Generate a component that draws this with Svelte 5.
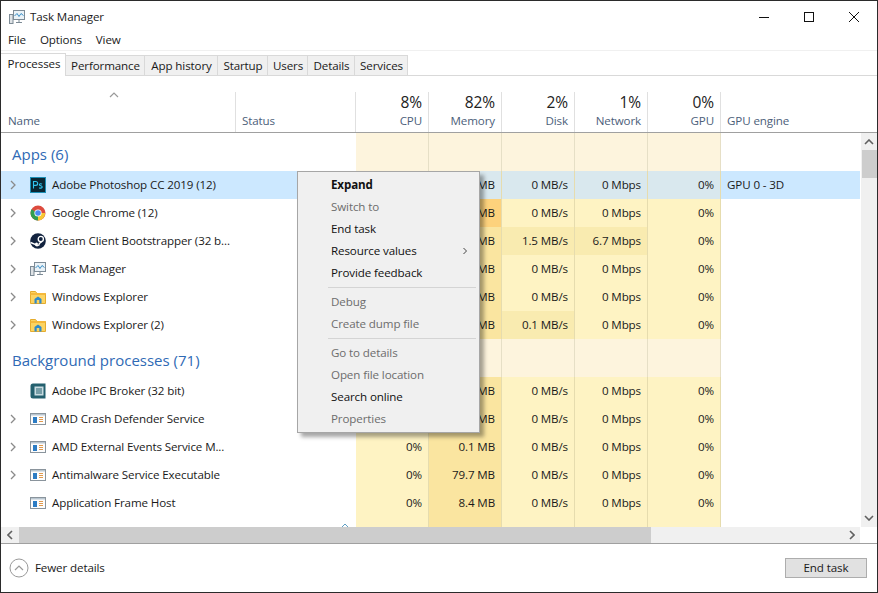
<script>
  const H = '#fef3c3', M = '#fae5a0', D = '#f9ebb0', O = '#fdd27c', S = '#d9e8ee';
  const apps = [
    { name: 'Adobe Photoshop CC 2019 (12)', icon: 'ps', arrow: true, sel: true, cpu: '', mem: 'MB', disk: '0 MB/s', net: '0 Mbps', gpu: '0%', engine: 'GPU 0 - 3D', mb: S },
    { name: 'Google Chrome (12)', icon: 'chrome', arrow: true, cpu: '', mem: 'MB', disk: '0 MB/s', net: '0 Mbps', gpu: '0%', mb: O },
    { name: 'Steam Client Bootstrapper (32 b...', icon: 'steam', arrow: true, cpu: '', mem: 'MB', disk: '1.5 MB/s', net: '6.7 Mbps', gpu: '0%', mb: M, db: D, nb: D },
    { name: 'Task Manager', icon: 'tm', arrow: true, cpu: '', mem: 'MB', disk: '0 MB/s', net: '0 Mbps', gpu: '0%', mb: M },
    { name: 'Windows Explorer', icon: 'folder', arrow: true, cpu: '', mem: 'MB', disk: '0 MB/s', net: '0 Mbps', gpu: '0%', mb: M },
    { name: 'Windows Explorer (2)', icon: 'folder', arrow: true, cpu: '', mem: 'MB', disk: '0.1 MB/s', net: '0 Mbps', gpu: '0%', mb: M, db: D }
  ];
  const bg = [
    { name: 'Adobe IPC Broker (32 bit)', icon: 'ipc', cpu: '', mem: 'MB', disk: '0 MB/s', net: '0 Mbps', gpu: '0%', mb: M },
    { name: 'AMD Crash Defender Service', icon: 'svc', arrow: true, cpu: '', mem: 'MB', disk: '0 MB/s', net: '0 Mbps', gpu: '0%', mb: M },
    { name: 'AMD External Events Service M...', icon: 'svc', arrow: true, cpu: '0%', mem: '0.1 MB', disk: '0 MB/s', net: '0 Mbps', gpu: '0%', mb: M },
    { name: 'Antimalware Service Executable', icon: 'svc', arrow: true, cpu: '0%', mem: '79.7 MB', disk: '0 MB/s', net: '0 Mbps', gpu: '0%', mb: M },
    { name: 'Application Frame Host', icon: 'svc', cpu: '0%', mem: '8.4 MB', disk: '0 MB/s', net: '0 Mbps', gpu: '0%', mb: M },
    { name: '', icon: 'svc', cpu: '', mem: '', disk: '', net: '', gpu: '', mb: M, cut: true }
  ];
  const tabs = [['Performance', 79], ['App history', 73], ['Startup', 50], ['Users', 40], ['Details', 47], ['Services', 53]];
  const heads = [['8%', 'CPU'], ['82%', 'Memory'], ['2%', 'Disk'], ['1%', 'Network'], ['0%', 'GPU']];
  const menu = [
    [{ t: 'Expand', b: true }, { t: 'Switch to', d: true }, { t: 'End task' }, { t: 'Resource values', sub: true }, { t: 'Provide feedback' }],
    [{ t: 'Debug', d: true }, { t: 'Create dump file', d: true }],
    [{ t: 'Go to details', d: true }, { t: 'Open file location', d: true }, { t: 'Search online' }, { t: 'Properties', d: true }]
  ];
  function cellBg(r, v) { return r.sel ? S : (v || H); }
</script>

{#snippet icon(k)}
  <svg class="ico" viewBox="0 0 16 16" width="16" height="16">
    {#if k === 'ps'}
      <rect x="0.5" y="0.5" width="15" height="15" fill="#0b2733" stroke="#1c8fb5" />
      <path d="M3.500 11.500V4.500h2.200a1.900 1.900 0 0 1 0 3.900H3.500M12 7.200c-.8-.7-2.600-.7-2.600.5 0 1.400 2.800.9 2.800 2.300 0 1.300-2 1.400-3 .7" fill="none" stroke="#31c5f0" stroke-width="1.100" />
    {:else if k === 'chrome'}
      <circle cx="8" cy="8" r="7.500" fill="#dd4b3e" />
      <path d="M8 8 1.500 4.300A7.500 7.500 0 0 0 8 15.500l3.500-6z" fill="#2f9e4f" />
      <path d="M8 8h7.200A7.500 7.500 0 0 1 8 15.500z" fill="#f7c833" />
      <circle cx="8" cy="8" r="3.600" fill="#fff" />
      <circle cx="8" cy="8" r="2.800" fill="#4a8bf0" />
    {:else if k === 'steam'}
      <circle cx="8" cy="8" r="7.800" fill="#12233f" />
      <path d="M.6 9.500 5 11.300a2.300 2.300 0 0 0 4.400-.9L12 8.500" fill="none" stroke="#fff" stroke-width="1.400" />
      <circle cx="10.800" cy="6" r="2.600" fill="none" stroke="#fff" stroke-width="1.300" />
      <circle cx="6.500" cy="11" r="1.500" fill="#fff" />
    {:else if k === 'tm'}
      <rect x="4.500" y="1.500" width="11" height="9" fill="#eaf2f7" stroke="#7d8b96" />
      <path d="M5.500 7 8 4.500l2 3 2-3 2.500 2" fill="none" stroke="#3a8fc7" />
      <rect x="0.500" y="5.500" width="3.500" height="9" fill="#dfe3e6" stroke="#7d8b96" />
      <path d="M7 13.500h6M10 10.500v3" stroke="#7d8b96" fill="none" />
    {:else if k === 'folder'}
      <path d="M0.500 2.500h5l1.500 2h8.500v10H.5z" fill="#fcd462" stroke="#e5ac2e" />
      <rect x="0.500" y="4" width="15" height="2" fill="#f5b93c" />
      <path d="M4.500 14.500V10l3.500-2.500 3.500 2.500v4.500h-2.200V11H6.700v3.500z" fill="#2f8ac9" />
    {:else if k === 'ipc'}
      <path d="M.5 3A2.500 2.500 0 0 1 3 .5h12.500v15H3A2.500 2.500 0 0 1 .5 13z" fill="#24606e" />
      <rect x="4.500" y="3.500" width="9" height="9" fill="#c9dce1" />
      <path d="M6 6h6M6 8h6M6 10h6" stroke="#24606e" />
    {:else}
      <rect x="0.500" y="2.500" width="15" height="11" fill="#fdfdfd" stroke="#8a949c" />
      <rect x="1" y="3" width="14" height="1.500" fill="#b9c6d0" />
      <rect x="3" y="6" width="4" height="6" fill="#2c7cc4" />
      <path d="M9 6.500h4M9 8.500h4M9 10.500h4" stroke="#e09a4f" />
    {/if}
  </svg>
{/snippet}

{#snippet chev()}
  <svg class="chev" viewBox="0 0 8 10" width="8" height="10"><path d="M2 1l4 4-4 4" fill="none" stroke="#8a8a8a" stroke-width="1.300" /></svg>
{/snippet}

{#snippet row(r)}
  <div class="row" class:sel={r.sel} class:cut={r.cut}>
    <div class="c name">
      <span class="exp">{#if r.arrow}{@render chev()}{/if}</span>
      {@render icon(r.icon)}
      <span class="nm">{r.name}</span>
    </div>
    <div class="c status">
      {#if r.cut}<svg class="mini" viewBox="0 0 8 5" width="8" height="5"><path d="M1 4l3-3 3 3" fill="none" stroke="#5f9fc4" /></svg>{/if}
    </div>
    <div class="c num" style:background={cellBg(r)}>{r.cpu}</div>
    <div class="c num" style:background={cellBg(r, r.mb)}>{r.mem}</div>
    <div class="c num" style:background={cellBg(r, r.db)}>{r.disk}</div>
    <div class="c num" style:background={cellBg(r, r.nb)}>{r.net}</div>
    <div class="c num" style:background={cellBg(r)}>{r.gpu}</div>
    <div class="c engine">{r.engine ?? ''}</div>
  </div>
{/snippet}

{#snippet group(t)}
  <div class="row grp">
    <div class="c gname">{t}</div>
    <div class="c status"></div>
    <div class="c blank"></div><div class="c blank"></div><div class="c blank"></div><div class="c blank"></div><div class="c blank"></div>
    <div class="c engine"></div>
  </div>
{/snippet}

<div class="win">
  <header class="title">
    <span class="tico">{@render icon('tm')}</span>
    <span class="ttext">Task Manager</span>
    <div class="caption">
      <svg viewBox="0 0 12 12" width="12" height="12"><path d="M1 6.500h10" stroke="#111" /></svg>
      <svg viewBox="0 0 12 12" width="12" height="12"><rect x="1.500" y="1.500" width="9" height="9" fill="none" stroke="#111" /></svg>
      <svg viewBox="0 0 12 12" width="12" height="12"><path d="M1 1l10 10M11 1 1 11" stroke="#111" /></svg>
    </div>
  </header>

  <nav class="menubar"><span>File</span><span>Options</span><span>View</span></nav>

  <div class="tabs">
    <div class="tab on">Processes</div>
    {#each tabs as [t, w]}<div class="tab" style:width="{w}px">{t}</div>{/each}
  </div>

  <div class="head">
    <div class="h hname">
      <svg class="sort" viewBox="0 0 10 6" width="10" height="6"><path d="M1 5l4-4 4 4" fill="none" stroke="#9a9a9a" stroke-width="1.200" /></svg>
      <span class="lab">Name</span>
    </div>
    <div class="h hstatus"><span class="lab">Status</span></div>
    {#each heads as [p, l]}
      <div class="h hnum"><span class="pct">{p}</span><span class="lab">{l}</span></div>
    {/each}
    <div class="h hengine"><span class="lab">GPU engine</span></div>
  </div>

  <div class="body">
    <div class="list">
      <div class="rows">
        {@render group('Apps (6)')}
        {#each apps as r}{@render row(r)}{/each}
        {@render group('Background processes (71)')}
        {#each bg as r}{@render row(r)}{/each}
      </div>
      <div class="ctx">
        {#each menu as sec, i}
          {#if i > 0}<div class="sep"></div>{/if}
          {#each sec as it}
            <div class="item" class:b={it.b} class:d={it.d}>
              <span>{it.t}</span>
              {#if it.sub}<svg viewBox="0 0 6 8" width="6" height="8"><path d="M1.500 1l3 3-3 3" fill="none" stroke="#444" /></svg>{/if}
            </div>
          {/each}
        {/each}
      </div>
    </div>
    <div class="vbar">
      <svg viewBox="0 0 10 6" width="10" height="6"><path d="M1 5l4-4 4 4" fill="none" stroke="#606060" stroke-width="1.600" /></svg>
      <div class="vthumb"></div>
      <svg class="down" viewBox="0 0 10 6" width="10" height="6"><path d="M1 1l4 4 4-4" fill="none" stroke="#606060" stroke-width="1.600" /></svg>
    </div>
  </div>

  <div class="hbar">
    <svg viewBox="0 0 6 10" width="6" height="10"><path d="M5 1 1 5l4 4" fill="none" stroke="#606060" stroke-width="1.600" /></svg>
    <div class="hthumb"></div>
    <svg class="right" viewBox="0 0 6 10" width="6" height="10"><path d="M1 1l4 4-4 4" fill="none" stroke="#606060" stroke-width="1.600" /></svg>
  </div>

  <footer class="foot">
    <svg viewBox="0 0 20 20" width="20" height="20"><circle cx="10" cy="10" r="9" fill="#fff" stroke="#9a9a9a" /><path d="M6 12l4-4 4 4" fill="none" stroke="#9a9a9a" stroke-width="1.200" /></svg>
    <span class="fewer">Fewer details</span>
    <button class="end">End task</button>
  </footer>
</div>

<style>
  :global(body) { margin: 0; background: #fff; }
  .win {
    box-sizing: border-box; width: 878px; height: 593px; border: 1px solid #2b2b2b;
    display: flex; flex-direction: column; background: #fff; overflow: hidden;
    font: 11.6px/16px "Open Sans", "Noto Sans", sans-serif; color: #1a1a1a; letter-spacing: -0.12px;
  }
  .title { height: 31px; display: flex; align-items: center; padding-left: 8px; flex: none; }
  .tico { display: flex; margin-right: 5px; }
  .ttext { flex: 1; }
  .caption { display: flex; gap: 33px; padding-right: 17px; align-items: center; }
  .caption svg { display: block; }
  .menubar { height: 19px; box-sizing: border-box; flex: none; display: flex; gap: 14px; padding: 0 0 2px 7px; align-items: center; border-bottom: 1px solid #f0f0f0; }
  .tabs { height: 25px; flex: none; display: flex; align-items: flex-end; border-bottom: 1px solid #d9d9d9; box-sizing: border-box; }
  .tab { box-sizing: border-box; height: 20px; padding-left: 1px; text-align: center; line-height: 20px; background: #f0f0f0; border: 1px solid #d9d9d9; border-bottom: 0; border-left: 0; }
  .tab.on { width: 65px; height: 23px; padding-left: 2px; line-height: 20px; background: #fff; margin-bottom: -1px; position: relative; }
  .head, .row { display: grid; grid-template-columns: 235px 120px repeat(5, 73px) 139px; }
  .head { height: 57px; box-sizing: border-box; flex: none; border-bottom: 1px solid #a0a0a0; }
  .h { box-sizing: border-box; border-right: 1px solid #e0e0e0; display: flex; flex-direction: column; justify-content: flex-end; padding: 0 6px 3px 7px; position: relative; margin-top: 16px; height: 40px; }
  .hname { padding-left: 7px; }
  .hstatus { padding-left: 6px; }
  .hengine { border-right: 0; padding-left: 6px; }
  .hnum { align-items: flex-end; }
  .sort { position: absolute; left: 108px; top: 0; }
  .pct { font-size: 15.500px; line-height: 20px; color: #222; margin-bottom: 1px; }
  .lab { color: #4c607a; line-height: 16px; }
  .body { flex: none; height: 394px; display: flex; }
  .list { flex: 1; position: relative; overflow: hidden; }
  .rows { width: 859px; }
  .row { height: 28px; }
  .row.sel .name, .row.sel .status, .row.sel .engine { background: #cce8ff; }
  .grp { height: 38px; }
  .c { box-sizing: border-box; display: flex; align-items: center; min-width: 0; }
  .name { padding-left: 0; white-space: nowrap; overflow: hidden; }
  .exp { width: 29px; padding-left: 8px; box-sizing: border-box; display: flex; flex: none; }
  .ico { display: block; flex: none; }
  .nm { margin-left: 6px; }
  .cut .ico { margin-top: 20px; }
  .status { position: relative; }
  .mini { position: absolute; left: 105px; top: 6px; }
  .num { justify-content: flex-end; padding-right: 6px; border-right: 1px solid #e6dcae; }
  .blank { background: #fdf4dd; border-right: 1px solid #e6dfc6; }
  .engine { padding-left: 6px; }
  .gname { font-size: 15px; color: #2f6ab5; padding: 4px 0 0 11px; letter-spacing: 0; white-space: nowrap; }
  .ctx {
    position: absolute; left: 296px; top: 38px; width: 183px; box-sizing: border-box; padding: 2px 0 2px;
    background: #f0f0f0; border: 1px solid #a6a6a6; box-shadow: 4px 4px 4px rgba(0, 0, 0, 0.35); color: #111;
  }
  .item { height: 22px; display: flex; align-items: center; justify-content: space-between; padding: 0 11px 0 33px; }
  .item.b { font-weight: 700; }
  .item.d { color: #6d6d6d; }
  .sep { height: 1px; margin: 3px 3px 3px 30px; background: #d4d4d4; }
  .vbar { width: 16px; background: #f0f0f0; display: flex; flex-direction: column; align-items: center; padding-top: 6px; box-sizing: border-box; margin-left: 1px; }
  .vthumb { width: 15px; height: 28px; background: #cdcdcd; margin-top: 5px; }
  .down { margin-top: auto; margin-bottom: 6px; }
  .hbar { height: 17px; box-sizing: border-box; flex: none; background: #f0f0f0; display: flex; align-items: center; padding: 0 22px 0 6px; border-bottom: 1px solid #a0a0a0; position: relative; }
  .hbar::after { content: ""; position: absolute; right: 0; top: 0; bottom: 0; width: 17px; background: #fff; }
  .hthumb { width: 632px; height: 16px; background: #cdcdcd; margin-left: 6px; }
  .right { margin-left: auto; }
  .foot { flex: 1; min-height: 0; display: flex; align-items: center; padding: 0 10px 0 8px; }
  .fewer { margin-left: 6px; flex: 1; }
  .end { width: 82px; height: 20px; background: #e1e1e1; border: 1px solid #adadad; padding: 0; font: inherit; letter-spacing: inherit; color: #1a1a1a; }
</style>
